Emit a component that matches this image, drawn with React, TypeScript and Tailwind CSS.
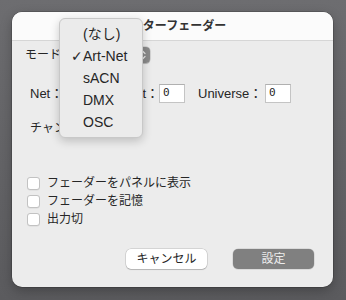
import React from "react";

const FONT = { fontFamily: '"Liberation Sans", "Noto Sans CJK JP", sans-serif' };
const MONO = { fontFamily: '"DejaVu Sans Mono", monospace' };

function Field() {
  return (
    <div className="w-[26px] h-[19px] shrink-0 bg-white border border-[#c4c4c4] border-t-[#b0b0b0] flex items-center pl-[3px] text-[11px] text-[#1f1f1f]" style={MONO}>
      0
    </div>
  );
}

function Check({ label }: { label: string }) {
  return (
    <div className="h-[18px] flex items-center ml-[15px] gap-[7px]">
      <div className="w-[13px] h-[13px] shrink-0 rounded-[3px] bg-white border border-[#c2c2c2] shadow-[0_0.5px_0.5px_rgba(0,0,0,0.08)]" />
      <span className="text-[12px] text-[#262626] whitespace-nowrap">{label}</span>
    </div>
  );
}

export default function App() {
  const items = ["(なし)", "Art-Net", "sACN", "DMX", "OSC"];
  return (
    <div className="relative w-[346px] h-[300px] overflow-hidden bg-linear-to-b from-[#6d6d70] to-[#5b5b5e] pt-[12px] pl-[12px]" style={FONT}>
      <div className="w-[321px] h-[275px] rounded-[10px] overflow-hidden bg-[#ececec] flex flex-col shadow-[0_0_0_0.5px_rgba(0,0,0,0.3),0_4px_12px_rgba(0,0,0,0.25)]">
        <div className="h-[29px] shrink-0 bg-[#fbfbfb] border-b border-[#d6d6d6] flex items-center justify-center text-[12px] font-bold text-[#333] whitespace-nowrap">
          マスターフェーダー
        </div>
        <div className="flex flex-col">
          <div className="mt-[6px] ml-[13px] h-[16px] flex items-center">
            <span className="w-[45px] shrink-0 text-[12px] text-[#262626] whitespace-nowrap">モード：</span>
            <div className="w-[80px] h-[16px] shrink-0 bg-white rounded-[4px] shadow-[0_0_0_0.5px_rgba(0,0,0,0.2),0_1px_1px_rgba(0,0,0,0.15)] flex items-center justify-end">
              <div className="w-[15px] h-[16px] rounded-[4px] bg-[#8a8a8a] flex items-center justify-center">
                <svg width="7" height="10" viewBox="0 0 7 10" fill="none" stroke="#e8e8e8" strokeWidth="1.3" strokeLinecap="round" strokeLinejoin="round">
                  <path d="M1 3.5 L3.5 1 L6 3.5" />
                  <path d="M1 6.5 L3.5 9 L6 6.5" />
                </svg>
              </div>
            </div>
          </div>
          <div className="mt-[21px] ml-[18px] h-[19px] flex items-center text-[13px] text-[#262626] whitespace-nowrap">
            <span className="w-[34px] shrink-0">Net：</span>
            <Field />
            <span className="ml-[10px] w-[59px] shrink-0 text-right">Subnet：</span>
            <Field />
            <span className="ml-[13px] w-[67px] shrink-0">Universe：</span>
            <Field />
          </div>
          <div className="mt-[17px] ml-[18px] h-[16px] flex items-center text-[12px] text-[#262626] whitespace-nowrap">
            チャンネル：
          </div>
          <div className="mt-[38px] flex flex-col">
            <Check label="フェーダーをパネルに表示" />
            <Check label="フェーダーを記憶" />
            <Check label="出力切" />
          </div>
          <div className="mt-[21px] h-[20px] flex justify-end pr-[19px] gap-[26px]">
            <button className="w-[81px] h-[20px] rounded-[5px] bg-white text-[12px] text-[#262626] shadow-[0_0_0_0.5px_rgba(0,0,0,0.2),0_1px_1px_rgba(0,0,0,0.15)] flex items-center justify-center whitespace-nowrap">
              キャンセル
            </button>
            <button className="w-[81px] h-[20px] rounded-[5px] bg-[#808080] text-[12px] text-[#ededed] shadow-[0_0_0_0.5px_rgba(0,0,0,0.15)] flex items-center justify-center whitespace-nowrap">
              設定
            </button>
          </div>
        </div>
      </div>
      <div className="absolute left-[59px] top-[18px] w-[84px] h-[120px] rounded-[6px] bg-[#ebebeb] border border-[#c8c8c8] shadow-[0_3px_10px_rgba(0,0,0,0.2)] pt-[4px]">
        {items.map((it, i) => (
          <div key={it} className="h-[22px] flex items-center pl-[11px] text-[14px] text-[#262626] whitespace-nowrap">
            <span className="w-[12px] shrink-0 text-[14px]" style={{ fontFamily: '"DejaVu Sans", sans-serif' }}>{i === 1 ? "✓" : ""}</span>
            <span>{it}</span>
          </div>
        ))}
      </div>
    </div>
  );
}
